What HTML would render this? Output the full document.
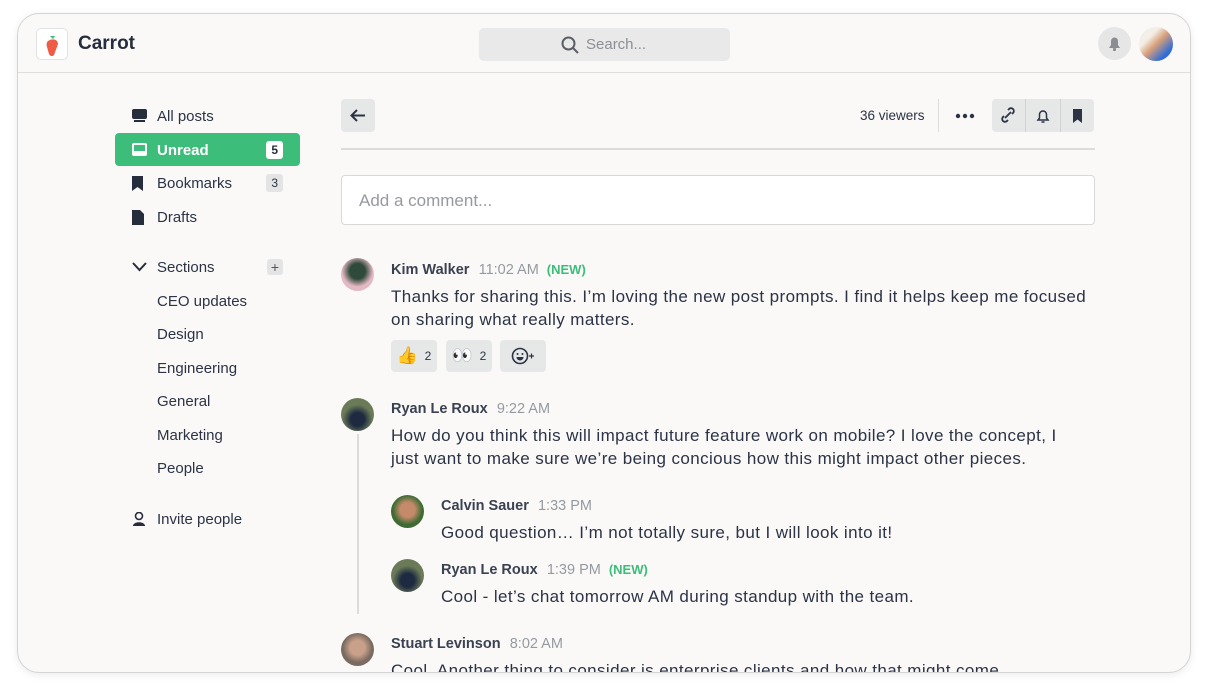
<!DOCTYPE html>
<html><head><style>
*{box-sizing:border-box;margin:0;padding:0}
body{width:1208px;height:694px;background:#fff;font-family:"Liberation Sans",sans-serif;color:#2b3345;position:relative;overflow:hidden}
.win{position:absolute;left:17px;top:13px;width:1174px;height:660px;border:1.5px solid #d4d4d4;border-radius:22px;background:#faf9f8;overflow:hidden;box-shadow:0 2px 8px rgba(0,0,0,.08)}
.hdr{position:absolute;left:0;top:0;width:100%;height:59px;border-bottom:1.5px solid #dedede}
.logo{position:absolute;left:18px;top:14px;width:32px;height:32px;border:1px solid #e2e2e2;border-radius:5px;background:#fff}
.brand{position:absolute;left:60px;top:19px;font-size:19px;font-weight:bold;color:#262d3d}
.search{position:absolute;left:461px;top:14px;width:251px;height:33px;background:#e9e9e9;border-radius:5px;color:#8b8f96;font-size:15px;padding:8px 0 0 107px}
.bellc{position:absolute;left:1080px;top:13px;width:33px;height:33px;border-radius:50%;background:#e6e6e6}
.av{position:absolute;border-radius:50%}
.nav{position:absolute;left:97px;top:85px;width:185px}
.ni{height:33.5px;font-size:15px;display:flex;align-items:center;padding-left:42px;position:relative;padding-top:2px}
.ni .ic{position:absolute;left:17px;top:10px}
.sel{background:#3dbd7a;color:#fff;font-weight:bold;border-radius:4px}
.badge{position:absolute;right:17px;top:8px;font-size:12px;padding:2px 5px;border-radius:3px;background:#e4e4e4}
.main{position:absolute;left:323px;top:85px;width:754px}
.btn{position:absolute;background:#e6e7e7;border-radius:4px}
.cmt{position:absolute;left:0;top:76px;width:754px;height:50px;border:1px solid #d8d8d8;border-radius:4px;background:#fff;font-size:17px;color:#969a9f;padding:15px 0 0 17px}
.msg{position:absolute;font-size:17px;line-height:23px;letter-spacing:0.4px;white-space:nowrap}
.nm{font-size:14.5px;font-weight:bold;color:#3a4150;letter-spacing:0}
.tm{font-size:14.5px;color:#959aa0;font-weight:normal;letter-spacing:0}
.new{font-size:13px;color:#3dbd7a;font-weight:bold;margin-left:8px;letter-spacing:0}
.rx{position:absolute;height:32px;background:#e6e7e7;border-radius:4px;font-size:12px;display:flex;align-items:center;justify-content:center}
.rx b{font-size:17px;font-weight:normal}
</style></head><body>
<div class="win">
<div class="hdr">
<div class="logo"><svg width="32" height="32"><path d="M11 12c4-3 10-2 10 3l-4 11c-2 2-4 1-5 -1l-2-7c-1-3 0-5 1-6z" fill="#f05b43"/><path d="M13 7l3 3 2-3z" fill="#3dbd7a"/></svg></div>
<div class="brand">Carrot</div>
<div class="search">Search...<svg style="position:absolute;left:82px;top:8px" width="18" height="18"><circle cx="7.5" cy="7.5" r="6" stroke="#5a5f68" stroke-width="2" fill="none"/><path d="M12 12l5 5" stroke="#5a5f68" stroke-width="2"/></svg></div>
<div class="bellc"><svg width="33" height="33"><path d="M11 21h11l-2-3v-4a3.5 3.5 0 0 0-7 0v4z" fill="#8a8d92"/><circle cx="16.5" cy="22.5" r="1.6" fill="#8a8d92"/></svg></div>
<div class="av" style="left:1121px;top:13px;width:34px;height:34px;background:linear-gradient(135deg,#f3efe8 30%,#d9a07a 50%,#2f6bd8 80%)"></div>
</div>
<div class="nav">
<div class="ni"><svg class="ic" width="15" height="13"><rect x="0" y="0" width="15" height="10" rx="2" fill="#262d3d"/><rect x="2" y="11" width="11" height="2" fill="#262d3d"/></svg>All posts</div>
<div class="ni sel"><svg class="ic" width="15" height="13"><rect x="0" y="0" width="15" height="13" rx="2" fill="#fff"/><rect x="2" y="2" width="11" height="6" fill="#3dbd7a"/></svg>Unread<span class="badge" style="background:#fff;color:#262d3d">5</span></div>
<div class="ni"><svg class="ic" width="12" height="15"><path d="M0 0h11v15l-5.5-4L0 15z" fill="#262d3d"/></svg>Bookmarks<span class="badge">3</span></div>
<div class="ni"><svg class="ic" width="12" height="15"><path d="M0 0h8l4 4v11H0z" fill="#262d3d"/></svg>Drafts</div>
<div style="height:17px"></div>
<div class="ni"><svg class="ic" width="15" height="10" style="top:12px"><path d="M1 1l6.5 7 6.5-7" stroke="#262d3d" stroke-width="2" fill="none"/></svg>Sections<span style="position:absolute;right:17px;top:9px;width:16px;height:16px;background:#e4e4e4;border-radius:3px;font-size:14px;text-align:center;line-height:16px;color:#555">+</span></div>
<div class="ni">CEO updates</div>
<div class="ni">Design</div>
<div class="ni">Engineering</div>
<div class="ni">General</div>
<div class="ni">Marketing</div>
<div class="ni">People</div>
<div style="height:17px"></div>
<div class="ni"><svg class="ic" width="15" height="14"><circle cx="7" cy="4" r="3.5" fill="none" stroke="#262d3d" stroke-width="1.6"/><path d="M1 14c0-5 12-5 12 0z" fill="#262d3d"/></svg>Invite people</div>
</div>
<div class="main">
<div class="btn" style="left:0;top:0;width:34px;height:33px"><svg width="34" height="33"><path d="M24 16.5H11M16 11l-5.5 5.5L16 22" stroke="#2b3345" stroke-width="2" fill="none"/></svg></div>
<div style="position:absolute;left:519px;top:9px;font-size:13.5px">36 viewers</div>
<div style="position:absolute;left:597px;top:0;width:1px;height:33px;background:#ddd"></div>
<svg style="position:absolute;left:614px;top:14px" width="20" height="6"><circle cx="3" cy="3" r="2.2" fill="#2b3345"/><circle cx="10" cy="3" r="2.2" fill="#2b3345"/><circle cx="17" cy="3" r="2.2" fill="#2b3345"/></svg>
<div class="btn" style="left:651px;top:0;width:102px;height:33px">
<div style="position:absolute;left:33px;top:0;width:1px;height:33px;background:#d2d2d2"></div>
<div style="position:absolute;left:68px;top:0;width:1px;height:33px;background:#d2d2d2"></div>
<svg width="102" height="33"><path d="M13 19l6-6M12 17l-1 1a2.5 2.5 0 0 0 4 4l1-1M20 15l1-1a2.5 2.5 0 0 0-4-4l-1 1" stroke="#2b3345" stroke-width="1.8" fill="none"/><path d="M46 21h10l-1.5-2v-3.5a3.5 3.5 0 0 0-7 0V19z" stroke="#2b3345" stroke-width="1.5" fill="none"/><path d="M49.5 23h3" stroke="#2b3345" stroke-width="1.5"/><path d="M81 10h9v14l-4.5-3.5L81 24z" fill="#2b3345"/></svg></div>
<div style="position:absolute;left:0;top:49px;width:754px;height:1.5px;background:#dcdcdc"></div>
<div class="cmt">Add a comment...</div>
</div>
<div class="av" style="left:323px;top:244px;width:33px;height:33px;background:radial-gradient(circle at 50% 40%,#2f4a3a 30%,#e3b9c4 60%)"></div>
<div class="msg" style="left:373px;top:243px"><span class="nm">Kim Walker</span> <span class="tm">&nbsp;11:02 AM</span><span class="new">(NEW)</span></div>
<div class="msg" style="left:373px;top:271px">Thanks for sharing this. I’m loving the new post prompts. I find it helps keep me focused<br>on sharing what really matters.</div>
<div class="rx" style="left:373px;top:326px;width:46px"><b>👍</b>&nbsp;&nbsp;2</div>
<div class="rx" style="left:428px;top:326px;width:46px"><b>👀</b>&nbsp;&nbsp;2</div>
<div class="rx" style="left:482px;top:326px;width:46px"><svg width="24" height="18"><circle cx="9" cy="9" r="7.5" stroke="#2b3345" stroke-width="1.6" fill="none"/><circle cx="6.5" cy="7" r="1" fill="#2b3345"/><circle cx="11.5" cy="7" r="1" fill="#2b3345"/><path d="M5.5 10a3.5 3.5 0 0 0 7 0z" fill="#2b3345"/><path d="M18 9h5M20.5 6.5v5" stroke="#2b3345" stroke-width="1.2"/></svg></div>
<div class="av" style="left:323px;top:384px;width:33px;height:33px;background:radial-gradient(circle at 50% 65%,#1e2a40 25%,#6b7b58 55%)"></div>
<div style="position:absolute;left:339px;top:420px;width:2px;height:180px;background:#dcdcdc"></div>
<div class="msg" style="left:373px;top:382px"><span class="nm">Ryan Le Roux</span> <span class="tm">&nbsp;9:22 AM</span></div>
<div class="msg" style="left:373px;top:410px">How do you think this will impact future feature work on mobile? I love the concept, I<br>just want to make sure we’re being concious how this might impact other pieces.</div>
<div class="av" style="left:373px;top:481px;width:33px;height:33px;background:radial-gradient(circle at 50% 45%,#c48a6a 30%,#3e6b32 60%)"></div>
<div class="msg" style="left:423px;top:479px"><span class="nm">Calvin Sauer</span> <span class="tm">&nbsp;1:33 PM</span></div>
<div class="msg" style="left:423px;top:507px">Good question… I’m not totally sure, but I will look into it!</div>
<div class="av" style="left:373px;top:545px;width:33px;height:33px;background:radial-gradient(circle at 50% 65%,#1e2a40 25%,#6b7b58 55%)"></div>
<div class="msg" style="left:423px;top:543px"><span class="nm">Ryan Le Roux</span> <span class="tm">&nbsp;1:39 PM</span><span class="new">(NEW)</span></div>
<div class="msg" style="left:423px;top:571px">Cool - let’s chat tomorrow AM during standup with the team.</div>
<div class="av" style="left:323px;top:619px;width:33px;height:33px;background:radial-gradient(circle at 50% 45%,#c9a08a 30%,#7a6a60 60%)"></div>
<div class="msg" style="left:373px;top:617px"><span class="nm">Stuart Levinson</span> <span class="tm">&nbsp;8:02 AM</span></div>
<div class="msg" style="left:373px;top:645px">Cool. Another thing to consider is enterprise clients and how that might come</div>
</div>
</body></html>
